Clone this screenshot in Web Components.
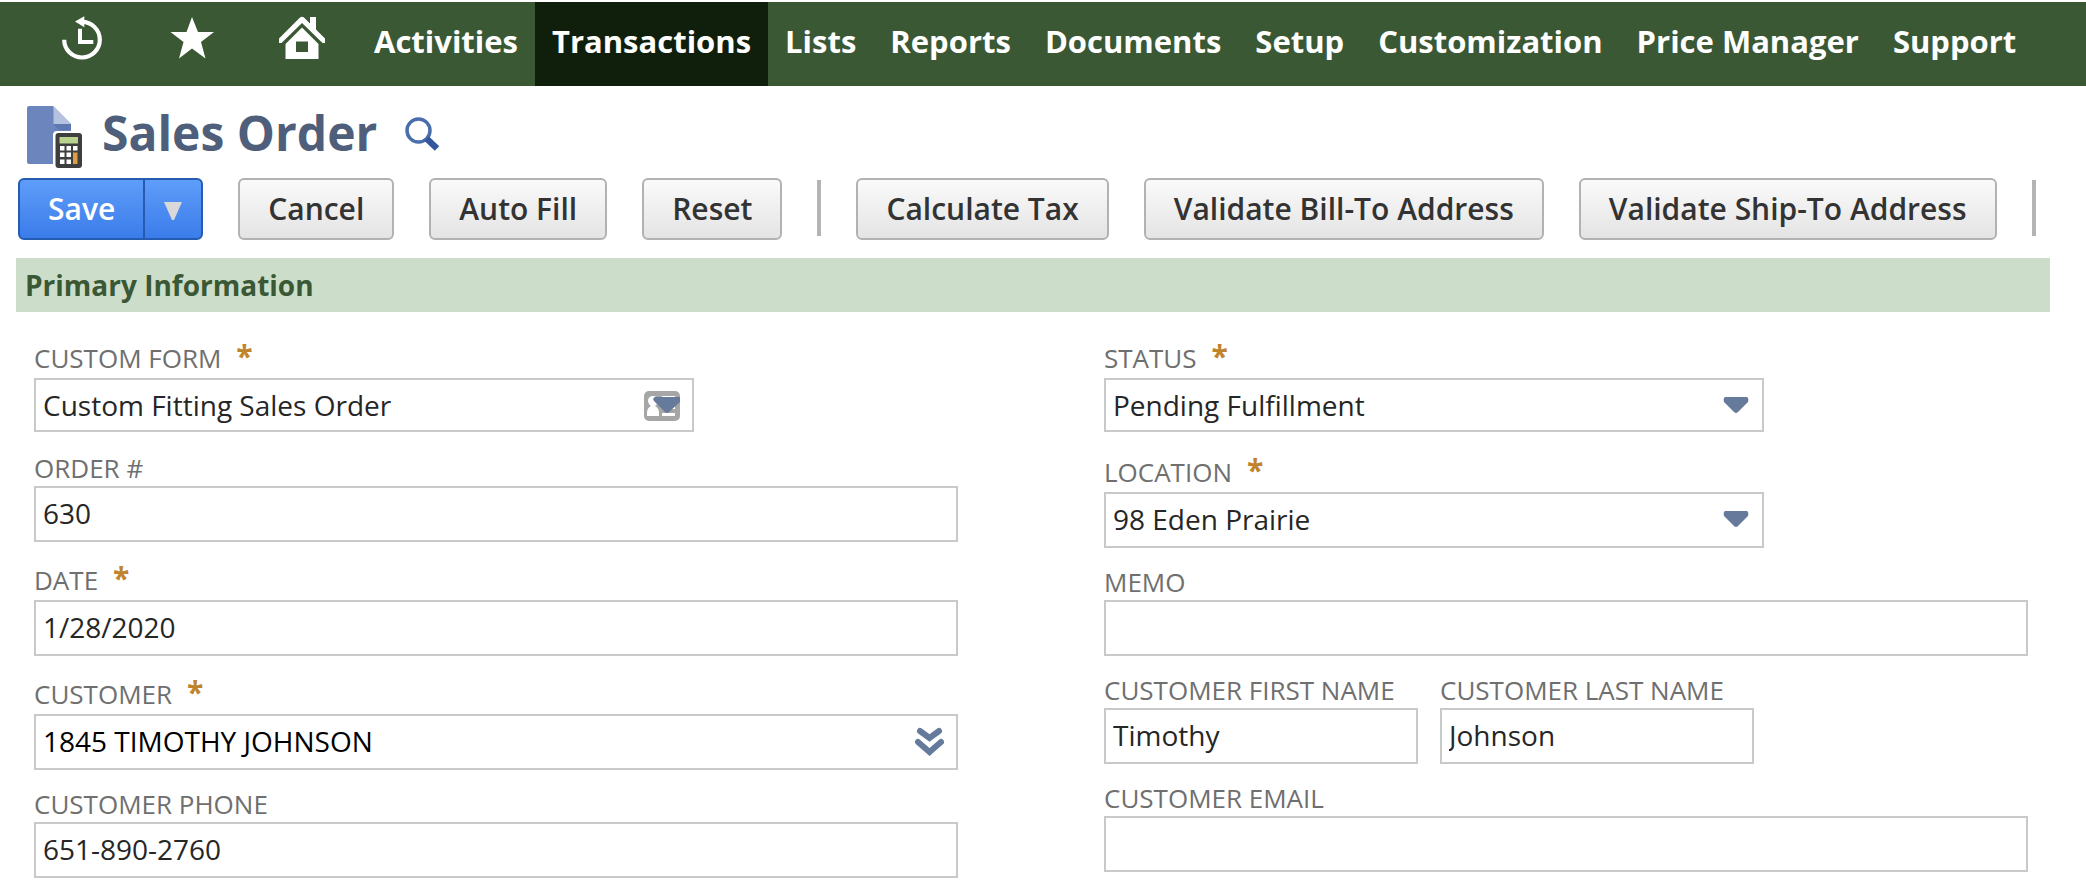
<!DOCTYPE html>
<html lang="en">
<head>
<meta charset="utf-8">
<title>Sales Order</title>
<style>
html, body { margin: 0; background: #fff; }
body { font-family: "Open Sans", "Noto Sans", sans-serif; color: #262626; }
</style>
</head>
<body>
<so-page></so-page>

<template id="t-page">
<style>
:host { display: block; padding-top: 2px; }
main { display: block; }
form { margin: 0; }
.actions { display: flex; align-items: center; gap: 35px; padding: 0 18px; }
.columns { display: grid; grid-template-columns: 1fr 1fr; gap: 146px; padding: 8px 22px 0 18px; }
.row { display: flex; gap: 22px; }
.row so-field { flex: 0 0 314px; }
section { margin: 18px 36px 0 16px; }
h2 { margin: 0; padding: 0 9px; background: #ccddca; color: #3a5834; font-size: 28px; line-height: 54px; font-weight: 700; }
</style>
<so-nav></so-nav>
<main>
  <so-title>Sales Order</so-title>
  <form onsubmit="return false">
    <div class="actions">
      <so-split-button>Save</so-split-button>
      <so-button>Cancel</so-button>
      <so-button>Auto Fill</so-button>
      <so-button>Reset</so-button>
      <so-divider></so-divider>
      <so-button>Calculate Tax</so-button>
      <so-button>Validate Bill-To Address</so-button>
      <so-button>Validate Ship-To Address</so-button>
      <so-divider></so-divider>
    </div>
    <section>
      <h2>Primary Information</h2>
      <div class="columns">
        <div>
          <so-field label="CUSTOM FORM" required kind="select" icon="card" value="Custom Fitting Sales Order"></so-field>
          <so-field label="ORDER #" value="630"></so-field>
          <so-field label="DATE" required value="1/28/2020"></so-field>
          <so-field label="CUSTOMER" required icon="chevrons" value="1845 TIMOTHY JOHNSON"></so-field>
          <so-field label="CUSTOMER PHONE" value="651-890-2760"></so-field>
        </div>
        <div>
          <so-field label="STATUS" required kind="select" icon="arrow" value="Pending Fulfillment"></so-field>
          <so-field label="LOCATION" required kind="select" icon="arrow" tall value="98 Eden Prairie"></so-field>
          <so-field label="MEMO" value=""></so-field>
          <div class="row">
            <so-field label="CUSTOMER FIRST NAME" value="Timothy"></so-field>
            <so-field label="CUSTOMER LAST NAME" value="Johnson"></so-field>
          </div>
          <so-field label="CUSTOMER EMAIL" value=""></so-field>
        </div>
      </div>
    </section>
  </form>
</main>
</template>

<template id="t-nav">
<style>
:host { display: block; background: #3a5834; }
nav { display: flex; height: 84px; padding-left: 27px; }
a { display: block; box-sizing: border-box; padding: 0 17px; color: #fff; font-size: 31px; line-height: 78px; font-weight: 700; text-decoration: none; white-space: nowrap; }
a[aria-current] { background: #101f0c; }
.icon { width: 110px; padding: 10px 0 0; line-height: 0; text-align: center; }
svg { width: 52px; height: 52px; fill: #fff; }
</style>
<nav>
  <a class="icon" href="#recent" aria-label="Recent records"><svg viewBox="0 0 52 52"><path d="M8.200 27.700 A17.800 17.800 0 1 0 26 9.900" fill="none" stroke="#fff" stroke-width="4.200"/><path d="M19 9.500 L28.300 4.300 V15.200Z M22 16.700 H26 V28 H37.300 V32 H22Z"/></svg></a>
  <a class="icon" href="#shortcuts" aria-label="Shortcuts"><svg viewBox="0 0 52 52"><path d="M26 5 L32 20 H48 L35 30 L39.500 46.500 L26 36.500 L13 46.500 L17.500 30 L4.500 20 H20.500Z"/></svg></a>
  <a class="icon" href="#home" aria-label="Home"><svg viewBox="0 0 52 52"><path d="M3 26.500 L24 5.500 Q26 4 28 5.500 L34 11.500 V5 H40 V17.500 L49 26.500 V31 H46.500 L26 11 L5.500 31 H3Z"/><path fill-rule="evenodd" d="M26 15.500 L42.500 32 V47 H9.500 V32Z M20 29.500 V40 H32 V29.500Z"/></svg></a>
  <a href="#activities">Activities</a>
  <a href="#transactions" aria-current="page">Transactions</a>
  <a href="#lists">Lists</a>
  <a href="#reports">Reports</a>
  <a href="#documents">Documents</a>
  <a href="#setup">Setup</a>
  <a href="#customization">Customization</a>
  <a href="#price-manager">Price Manager</a>
  <a href="#support">Support</a>
</nav>
</template>

<template id="t-title">
<style>
:host { display: flex; align-items: center; height: 92px; padding-left: 26px; }
h1 { margin: 2px 27px 0 18px; color: #4f5f7b; font-size: 48px; line-height: 68px; font-weight: 700; }
svg { display: block; flex: none; }
button { display: block; margin-top: 4px; border: 0; padding: 0; background: none; }
.doc { margin-top: 10px; }
</style>
<svg class="doc" width="58" height="64" viewBox="0 0 58 64"><path d="M3 1 H27 L45 19 V59 H3 Q1 59 1 57 V3 Q1 1 3 1Z" fill="#6c86bd"/><path d="M27.500 1 L45 19 H27.500Z" fill="#b4c2e0"/><path d="M27.500 19 H45 V25 H33Z" fill="#5d78b0"/><rect x="27" y="26" width="34" height="42" fill="#fff" rx="4"/><rect x="29.500" y="28" width="26.500" height="35" rx="3" fill="#3e3e3e"/><path d="M33.500 32 H52 V38.500 H33.500Z" fill="#b9d38f"/><path d="M34 41 h4.500 v4.500 h-4.500z M40.500 41 h4.500 v4.500 h-4.500z M47 41 h4.500 v4.500 h-4.500z M34 47.500 h4.500 v4.500 h-4.500z M40.500 47.500 h4.500 v4.500 h-4.500z M34 54.500 h4.500 v4.500 h-4.500z M40.500 54.500 h4.500 v4.500 h-4.500z" fill="#fff"/><path d="M47 47.500 h4.500 v11.500 h-4.500z" fill="#dd9d45"/></svg>
<h1><slot></slot></h1>
<button type="button" aria-label="Search"><svg width="36" height="36" viewBox="0 0 36 36"><circle cx="14.500" cy="14.500" r="11.500" fill="none" stroke="#4a6dab" stroke-width="3.500"/><path d="M22.500 22.500 L33 32.500" stroke="#33589c" stroke-width="6.500"/></svg></button>
</template>

<template id="t-button">
<style>
:host { display: block; flex: none; }
button { display: block; box-sizing: border-box; height: 62px; margin: 0; padding: 0 28px; border: 2px solid #b2b2b2; border-radius: 6px; background: linear-gradient(#fafafa, #e4e4e4); color: #333; font: 600 30px/56px "Open Sans", "Noto Sans", sans-serif; white-space: nowrap; }
</style>
<button type="button"><slot></slot></button>
</template>

<template id="t-split">
<style>
:host { display: flex; flex: none; box-sizing: border-box; height: 62px; border: 2px solid #255bb0; border-radius: 6px; background: linear-gradient(#5f9df9, #3a7cea); overflow: hidden; }
button { display: flex; align-items: center; justify-content: center; margin: 0; padding: 0 28px; border: 0; background: none; color: #fff; font: 600 30px/56px "Open Sans", "Noto Sans", sans-serif; }
.more { width: 58px; padding: 0; border-left: 2px solid #255bb0; }
svg { display: block; margin-top: 4px; }
</style>
<button type="submit"><slot></slot></button>
<button type="button" class="more" aria-label="More save options"><svg width="18" height="18" viewBox="0 0 18 18"><path d="M0 0 H18 L10 18 H8Z" fill="#d9d9d9"/></svg></button>
</template>

<template id="t-divider">
<style>
:host { display: block; flex: none; width: 4px; height: 56px; margin-bottom: 2px; background: #b4b4b4; }
</style>
</template>

<template id="t-field">
<style>
:host { display: block; min-height: 108px; }
:host([required]) { min-height: 114px; }
label { display: flex; align-items: flex-end; height: 52px; box-sizing: border-box; color: #6f6f6f; font-size: 26px; line-height: 36px; white-space: nowrap; }
:host([required]) label { height: 58px; padding-bottom: 2px; }
.star { display: none; margin-left: 15px; color: #c0842c; font-size: 30px; line-height: 40px; font-weight: 700; }
:host([required]) .star { display: block; }
.box { position: relative; }
:host([kind=select]) .box { max-width: 660px; }
input, select { display: block; box-sizing: border-box; width: 100%; height: 56px; margin: 0; padding: 0 8px 2px 7px; border: 2px solid #c9c9c9; border-radius: 0; background: #fff; color: #262626; font: 400 28px/38px "Open Sans", "Noto Sans", sans-serif; appearance: none; outline: 0; }
select { height: 54px; padding-bottom: 0; }
:host([tall]) select { height: 56px; padding-bottom: 2px; }
:host([icon=chevrons]) input { color: #000; }
svg { position: absolute; top: 13px; right: 14px; pointer-events: none; }
</style>
<label for="control"><span class="text"></span><span class="star" aria-hidden="true">*</span></label>
<div class="box"></div>
</template>

<script>
const clone = id => document.getElementById(id).content.cloneNode(true);

const define = (name, id) => customElements.define(name, class extends HTMLElement {
  constructor() {
    super();
    this.attachShadow({ mode: "open" }).append(clone(id));
  }
});

const fieldIcons = {
  arrow: '<svg width="28" height="30" viewBox="0 0 28 30"><path d="M3 6 H25 Q27 7 26 11 L16 21 Q14 23 12 21 L2 11 Q1 7 3 6Z" fill="#667b9c"/></svg>',
  card: '<svg width="38" height="30" viewBox="0 0 38 30"><rect x="2" y="0" width="36" height="30" rx="5" fill="#a6a6a6"/><path d="M5 25 V22 Q5 17 9 15 Q6 13 6 9 Q7 5 11 5 Q15 5 16 9 Q16 13 13 15 Q17 17 17 22 V25Z M20 5 H33 V7 H20Z M20 22 H33 V25 H20Z M30 15 H33 V18 H28Z" fill="#fff"/><path d="M13 6 H38 V11 L27 21 Q25 23 23 21 L12 10 Q10 7 13 6Z" fill="#667b9c"/></svg>',
  chevrons: '<svg width="30" height="30" viewBox="0 0 30 30"><path d="M6 4 L15.500 11 L25 4 M4 15 L15.500 25 L27 15" fill="none" stroke="#667b9c" stroke-width="6" stroke-linecap="round"/></svg>'
};

class SoField extends HTMLElement {
  constructor() {
    super();
    const root = this.attachShadow({ mode: "open" });
    root.append(clone("t-field"));
    this.box = root.querySelector(".box");
  }
  connectedCallback() {
    if (this.box.firstChild) return;
    const value = this.getAttribute("value") || "";
    this.shadowRoot.querySelector(".text").textContent = this.getAttribute("label");
    let control;
    if (this.getAttribute("kind") === "select") {
      control = document.createElement("select");
      control.add(new Option(value, value));
    } else {
      control = document.createElement("input");
      control.type = "text";
      control.value = value;
    }
    control.id = "control";
    control.required = this.hasAttribute("required");
    this.box.append(control);
    const icon = fieldIcons[this.getAttribute("icon")];
    if (icon) this.box.insertAdjacentHTML("beforeend", icon);
  }
}

define("so-button", "t-button");
define("so-split-button", "t-split");
define("so-divider", "t-divider");
define("so-nav", "t-nav");
define("so-title", "t-title");
customElements.define("so-field", SoField);
define("so-page", "t-page");
</script>
</body>
</html>
